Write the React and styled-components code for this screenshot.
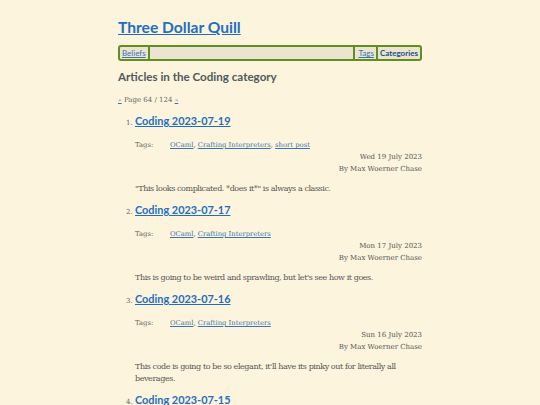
import React from "react";
import styled, { createGlobalStyle } from "styled-components";

const GlobalStyle = createGlobalStyle`
  html, body {
    margin: 0;
    padding: 0;
    background: #fcf4dc;
  }
  body {
    font-family: "DejaVu Serif", "Liberation Serif", serif;
    color: #555a5a;
  }
`;

const articles = [
  {
    n: 1,
    title: "Coding 2023-07-19",
    tags: ["OCaml", "Crafting Interpreters", "short post"],
    date: "Wed 19 July 2023",
    summary: '"This looks complicated. *does it*" is always a classic.',
  },
  {
    n: 2,
    title: "Coding 2023-07-17",
    tags: ["OCaml", "Crafting Interpreters"],
    date: "Mon 17 July 2023",
    summary: "This is going to be weird and sprawling, but let's see how it goes.",
  },
  {
    n: 3,
    title: "Coding 2023-07-16",
    tags: ["OCaml", "Crafting Interpreters"],
    date: "Sun 16 July 2023",
    summary:
      "This code is going to be so elegant, it'll have its pinky out for literally all beverages.",
  },
  {
    n: 4,
    title: "Coding 2023-07-15",
    tags: ["OCaml", "Crafting Interpreters"],
    date: "Sat 15 July 2023",
    summary: "",
  },
];

const Page = styled.div`
  width: 304px;
  margin: 0 auto;
  padding-top: 15px;
`;

const SiteTitle = styled.a`
  display: block;
  font-family: Lato, "Open Sans", sans-serif;
  font-weight: 700;
  font-size: 15.6px;
  line-height: 24px;
  color: #1f6fc0;
  text-decoration: underline;
`;

const Nav = styled.nav`
  display: flex;
  align-items: stretch;
  margin-top: 6px;
  border: 2px solid #5f8f1f;
  border-radius: 3px;
  background: #ebe4d0;
  height: 12px;
  font-family: Lato, "Open Sans", sans-serif;
  font-size: 8px;
  line-height: 12px;
`;

const NavLink = styled.a`
  padding: 0 2px;
  color: ${(p) => (p.$current ? "#1d4f8a" : "#3a73b3")};
  font-weight: ${(p) => (p.$current ? 700 : 400)};
  text-decoration: ${(p) => (p.$current ? "none" : "underline")};
  border-left: ${(p) => (p.$sep ? "2px solid #5f8f1f" : "none")};
`;

const Filler = styled.div`
  flex: 1;
  margin-right: 2px;
  border-left: 2px solid #5f8f1f;
  border-right: 2px solid #5f8f1f;
`;

const Heading = styled.h1`
  margin: 7px 0 0;
  font-family: Lato, "Open Sans", sans-serif;
  font-weight: 700;
  font-size: 11.6px;
  line-height: 18px;
  color: #505a5c;
`;

const Pager = styled.p`
  margin: 8px 0 0;
  font-size: 7px;
  line-height: 12px;
  color: #666;
  a {
    color: #3a73b3;
    font-size: 6px;
  }
`;

const List = styled.ol`
  margin: 6px 0 0;
  padding-left: 17px;
  font-size: 7px;
`;

const Item = styled.li`
  margin-bottom: 6px;
  &::marker {
    color: #666;
  }
`;

const ItemTitle = styled.a`
  font-family: Lato, "Open Sans", sans-serif;
  font-weight: 700;
  font-size: 10.9px;
  line-height: 18px;
  color: #1f6fc0;
  text-decoration: underline;
`;

const TagRow = styled.div`
  display: flex;
  margin-top: 9px;
  font-size: 6.8px;
  line-height: 12px;
`;

const TagLabel = styled.span`
  width: 35px;
  color: #666;
`;

const TagLink = styled.a`
  color: #3a73b3;
  text-decoration: underline;
`;

const Meta = styled.div`
  text-align: right;
  font-size: 7px;
  line-height: 12px;
  color: #555;
`;

const Summary = styled.p`
  margin: 8px 0 0;
  font-size: 8px;
  letter-spacing: -0.42px;
  line-height: 12px;
  color: #555;
`;

export default function App() {
  return (
    <>
      <GlobalStyle />
      <Page>
        <SiteTitle href="#">Three Dollar Quill</SiteTitle>
        <Nav>
          <NavLink href="#">Beliefs</NavLink>
          <Filler />
          <NavLink href="#">Tags</NavLink>
          <NavLink href="#" $sep $current>
            Categories
          </NavLink>
        </Nav>
        <Heading>Articles in the Coding category</Heading>
        <Pager>
          <a href="#">«</a> Page 64 / 124 <a href="#">»</a>
        </Pager>
        <List>
          {articles.map((a) => (
            <Item key={a.n}>
              <ItemTitle href="#">{a.title}</ItemTitle>
              <TagRow>
                <TagLabel>Tags:</TagLabel>
                <span>
                  {a.tags.map((t, i) => (
                    <React.Fragment key={t}>
                      <TagLink href="#">{t}</TagLink>
                      {i < a.tags.length - 1 ? ", " : ""}
                    </React.Fragment>
                  ))}
                </span>
              </TagRow>
              <Meta>
                {a.date}
                <br />
                By Max Woerner Chase
              </Meta>
              {a.summary && <Summary>{a.summary}</Summary>}
            </Item>
          ))}
        </List>
      </Page>
    </>
  );
}
